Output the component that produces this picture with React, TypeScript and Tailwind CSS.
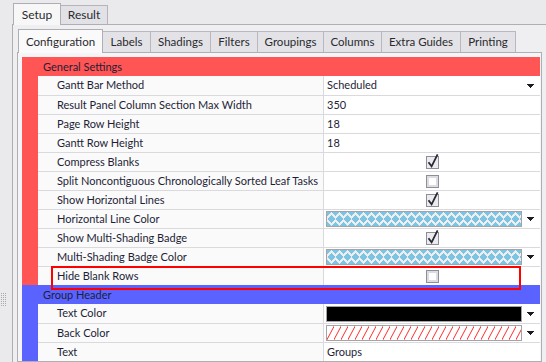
import React from "react";

type Row =
  | { label: string; type: "text"; value: string }
  | { label: string; type: "dropdown"; value: string }
  | { label: string; type: "check"; checked: boolean }
  | { label: string; type: "swatch"; swatch: "diamond" | "black" | "hatch" };

const general: Row[] = [
  { label: "Gantt Bar Method", type: "dropdown", value: "Scheduled" },
  { label: "Result Panel Column Section Max Width", type: "text", value: "350" },
  { label: "Page Row Height", type: "text", value: "18" },
  { label: "Gantt Row Height", type: "text", value: "18" },
  { label: "Compress Blanks", type: "check", checked: true },
  { label: "Split Noncontiguous Chronologically Sorted Leaf Tasks", type: "check", checked: false },
  { label: "Show Horizontal Lines", type: "check", checked: true },
  { label: "Horizontal Line Color", type: "swatch", swatch: "diamond" },
  { label: "Show Multi-Shading Badge", type: "check", checked: true },
  { label: "Multi-Shading Badge Color", type: "swatch", swatch: "diamond" },
  { label: "Hide Blank Rows", type: "check", checked: false },
];

const groupHeader: Row[] = [
  { label: "Text Color", type: "swatch", swatch: "black" },
  { label: "Back Color", type: "swatch", swatch: "hatch" },
  { label: "Text", type: "text", value: "Groups" },
];

function Arrow() {
  return (
    <svg width="7" height="4" viewBox="0 0 7 4" className="block shrink-0" shapeRendering="crispEdges">
      <polygon points="0,0 7,0 3.5,4" fill="#1c1c24" />
    </svg>
  );
}

function CheckBox({ checked }: { checked: boolean }) {
  if (checked) {
    return (
      <svg width="13" height="13" viewBox="0 0 13 13" className="block overflow-visible">
        <rect x="0.5" y="0.5" width="12" height="12" fill="#ececf0" stroke="#8e8e98" />
        <path d="M2.5 6.2 L5.6 10.4 L11.6 -1.6" fill="none" stroke="#2a2a34" strokeWidth="1.8" />
      </svg>
    );
  }
  return (
    <svg width="13" height="13" viewBox="0 0 13 13" className="block">
      <rect x="0.5" y="0.5" width="12" height="12" fill="#dcdce2" stroke="#8e8e98" />
      <rect x="3" y="3" width="7" height="7" fill="#ffffff" />
    </svg>
  );
}

function Swatch({ kind, id }: { kind: "diamond" | "black" | "hatch"; id: string }) {
  return (
    <svg width="196" height="16" viewBox="0 0 196 16" className="block shrink-0" shapeRendering="crispEdges">
      <defs>
        <pattern id={`d-${id}`} x="1" y="1" width="8" height="14" patternUnits="userSpaceOnUse">
          <rect width="8" height="14" fill="#eeeeee" />
          <polygon points="0,-4 4,0 0,4 -4,0" fill="#7cc4e4" />
          <polygon points="8,-4 12,0 8,4 4,0" fill="#7cc4e4" />
          <polygon points="4,3 8,7 4,11 0,7" fill="#7cc4e4" />
          <polygon points="0,10 4,14 0,18 -4,14" fill="#7cc4e4" />
          <polygon points="8,10 12,14 8,18 4,14" fill="#7cc4e4" />
        </pattern>
        <pattern id={`h-${id}`} x="1" y="1" width="7" height="14" patternUnits="userSpaceOnUse">
          <rect width="7" height="14" fill="#ffffff" />
          <path d="M-0.5 14.5 L7.5 -0.5" stroke="#ff2a2a" strokeWidth="1" shapeRendering="auto" />
        </pattern>
      </defs>
      <rect
        x="0.5"
        y="0.5"
        width="195"
        height="15"
        fill={kind === "black" ? "#000000" : kind === "diamond" ? `url(#d-${id})` : `url(#h-${id})`}
        stroke="#a4a4a8"
      />
    </svg>
  );
}

function Value({ row, id }: { row: Row; id: string }) {
  if (row.type === "text") {
    return <div className="flex h-full items-center pl-[3px]">{row.value}</div>;
  }
  if (row.type === "dropdown") {
    return (
      <div className="flex h-full items-center pl-[3px] pr-[6px]">
        <span>{row.value}</span>
        <span className="ml-auto">
          <Arrow />
        </span>
      </div>
    );
  }
  if (row.type === "check") {
    return (
      <div className="flex h-full items-center justify-center">
        <CheckBox checked={row.checked} />
      </div>
    );
  }
  return (
    <div className="flex h-full items-center pl-[2px]">
      <Swatch kind={row.swatch} id={id} />
      <span className="ml-[5px]">
        <Arrow />
      </span>
    </div>
  );
}

function Category({
  title,
  rows,
  headerBg,
  strip,
  prefix,
}: {
  title: string;
  rows: Row[];
  headerBg: string;
  strip: string;
  prefix: string;
}) {
  return (
    <div className="flex flex-col">
      <div className={`h-[19px] pl-[21px] leading-[19px] text-[#1e1e36] ${headerBg}`}>{title}</div>
      {rows.map((row, i) => (
        <div key={row.label} className="flex h-[19px]">
          <div className={`w-[16px] shrink-0 ${strip}`} />
          <div
            className={`flex w-[286px] shrink-0 items-center overflow-hidden border-r border-[#d9d9de] bg-[#fafafb] pl-[19px] whitespace-nowrap ${
              i === 0 ? "" : "border-t"
            }`}
          >
            {row.label}
          </div>
          <div className={`flex-1 border-[#d9d9de] bg-white ${i === 0 ? "" : "border-t"}`}>
            <Value row={row} id={`${prefix}${i}`} />
          </div>
        </div>
      ))}
    </div>
  );
}

const innerTabs: { label: string; w: string }[] = [
  { label: "Labels", w: "w-[48px]" },
  { label: "Shadings", w: "w-[60px]" },
  { label: "Filters", w: "w-[47px]" },
  { label: "Groupings", w: "w-[66px]" },
  { label: "Columns", w: "w-[58px]" },
  { label: "Extra Guides", w: "w-[79px]" },
  { label: "Printing", w: "w-[55px]" },
];

export default function App() {
  return (
    <div className="relative flex h-[362px] w-[546px] overflow-hidden bg-[#eaeaed] font-[family-name:Lato,'Liberation_Sans',sans-serif] text-[11px] text-[#1e1e36]">
      {/* left splitter strip */}
      <div className="w-[12px] shrink-0 pt-[293px] pl-[1px]">
        <svg width="5" height="13" viewBox="0 0 5 13" className="block" shapeRendering="crispEdges">
          {[0, 2, 4, 6, 8, 10, 12].map((y) => (
            <g key={y}>
              <rect x="0" y={y} width="1" height="1" fill="#a8a8ae" />
              <rect x="2" y={y} width="1" height="1" fill="#a8a8ae" />
              <rect x="4" y={y} width="1" height="1" fill="#a8a8ae" />
            </g>
          ))}
        </svg>
      </div>

      <div className="flex flex-1 flex-col">
        {/* outer tabs */}
        <div className="flex h-[24px] items-end pl-[1px] text-[12px] text-[#2a2a2e]">
          <div className="relative z-10 -mb-px flex h-[22px] w-[48px] items-center justify-center border border-b-0 border-[#aeaeb4] bg-[#f7f7f8]">
            Setup
          </div>
          <div className="flex h-[19px] w-[47px] items-center justify-center border border-b-0 border-l-0 border-[#b4b4ba] bg-[#e2e2e6]">
            Result
          </div>
        </div>

        {/* outer panel */}
        <div className="flex flex-1 flex-col border-l border-t border-[#aeaeb4] bg-[#efeff2] px-[4px] pt-[4px]">
          {/* inner tabs */}
          <div className="flex h-[23px] items-end pl-[1px] text-[11.5px] text-[#2a2a2e]">
            <div className="relative z-10 -mb-px flex h-[24px] w-[85px] items-center justify-center border border-b-0 border-[#aeaeb4] bg-[#fafafb]">
              Configuration
            </div>
            {innerTabs.map((t) => (
              <div
                key={t.label}
                className={`flex h-[21px] ${t.w} items-center justify-center border border-b-0 border-l-0 border-[#b8b8be] bg-[#e3e3e7]`}
              >
                {t.label}
              </div>
            ))}
          </div>

          {/* inner panel */}
          <div className="flex flex-1 flex-col border border-[#aeaeb4] bg-[#f5f5f7] pl-[4px] pr-[1px] pt-[4px]">
            <Category title="General Settings" rows={general} headerBg="bg-[#ff5555]" strip="bg-[#ff5555]" prefix="g" />
            <Category title="Group Header" rows={groupHeader} headerBg="bg-[#5a63ff]" strip="bg-[#5a63ff]" prefix="h" />
          </div>
        </div>
      </div>

      {/* highlight overlay */}
      <div className="absolute left-[51px] top-[266px] h-[24px] w-[470px] border-2 border-[#ff0000]" />
    </div>
  );
}
